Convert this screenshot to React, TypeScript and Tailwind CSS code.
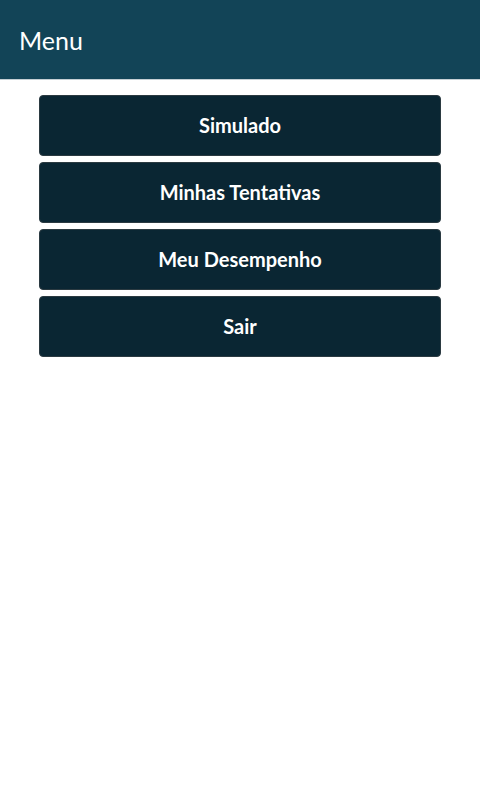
import React from 'react';

const items = ['Simulado', 'Minhas Tentativas', 'Meu Desempenho', 'Sair'];

const App = () => {
  return (
    <div className="min-h-screen bg-white" style={{ fontFamily: 'Lato, "Noto Sans", sans-serif' }}>
      {/* header */}
      <div className="h-20 flex items-center px-[19px] pt-[2px] bg-[#124457] border-b border-[#c5cfd4]">
        <span className="text-[25px] text-white leading-none">Menu</span>
      </div>

      <div className="flex flex-col gap-[6px] px-[39px] pt-[15px]">
        {items.map(label => (
          <button
            key={label}
            className="h-[61px] w-full pb-[2px] rounded-[4px] bg-[#0a2633] border border-[#2b3a41] text-white text-[20px] font-bold"
          >
            {label}
          </button>
        ))}
      </div>
    </div>
  );
};

export default App;
